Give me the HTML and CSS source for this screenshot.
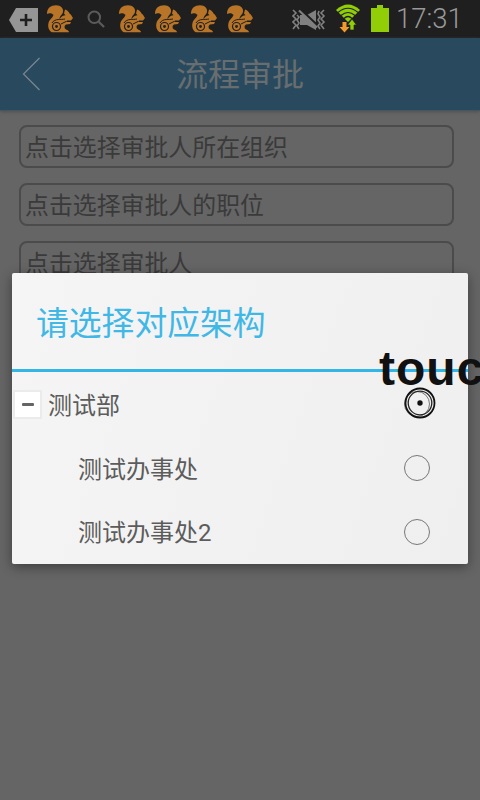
FILE: index.html
```html
<!DOCTYPE html>
<html lang="zh-CN">
<head>
<meta charset="utf-8">
<title>流程审批</title>
<link rel="stylesheet" href="styles.css">
</head>
<body>
<svg width="0" height="0" class="defs">
  <symbol id="squirrel" viewBox="0 0 28 28">
    <path fill="#b87527" d="M1 9C1 3 5 .3 10 .3c5 0 7.500 3 7 6.500-.4 3-3.500 4-3.500 7.200 1.500-2.500 4-3.500 6-3.800L18 8.500 19 4.500c2 .5 3.500 2 4.500 4 2 1 2.500 3.500 3.500 4.500l-2 2.500h-4l-1 1.500h5l-1 2-4 .5c-2 1-2 4 0 5 2 .7 3 1.500 3 2.800H6C3 26 1.500 22 2.500 18 3.500 14 7 13 7.500 9.800 5 7.500 3 8 1 9Z"/>
    <path d="M6 18c3-5 9-3 13-4M15 19l5-2.500" fill="none" stroke="#1f1f1f" stroke-width="1"/>
    <circle cx="10.500" cy="21.500" r="4" fill="none" stroke="#1f1f1f" stroke-width="1.200"/>
    <circle cx="10.500" cy="21.500" r="1.400" fill="#1f1f1f"/>
  </symbol>
</svg>
<div class="screen">
  <div class="status">
    <svg class="tag" width="30" height="24" viewBox="0 0 30 24"><path d="M0 12 7 0h22v24H7Z" fill="#959595"/><path d="M17 6v12M11 12h12" stroke="#1f1f1f" stroke-width="2.600"/></svg>
    <svg class="sq" width="28" height="28"><use href="#squirrel"/></svg>
    <svg class="search" width="19" height="19" viewBox="0 0 19 19" fill="none" stroke="#5b5b5b"><circle cx="7.300" cy="7.300" r="5.800" stroke-width="2"/><path d="m11.700 11.700 5.300 5.300" stroke-width="2.300"/></svg>
    <svg class="sq" width="28" height="28"><use href="#squirrel"/></svg>
    <svg class="sq" width="28" height="28"><use href="#squirrel"/></svg>
    <svg class="sq" width="28" height="28"><use href="#squirrel"/></svg>
    <svg class="sq" width="28" height="28"><use href="#squirrel"/></svg>
    <svg class="mute" width="34" height="22" viewBox="0 0 34 22">
      <path d="M8 6h7l9-5v20l-9-5H8Z" fill="#808080"/>
      <path d="m8 0 18 17" stroke="#1f1f1f" stroke-width="2.500"/>
      <path d="m7 1.500 18 17" stroke="#808080" stroke-width="2.200"/>
      <path d="m1 1 3 3-3 3 3 3-3 3 3 3-3 4M5 6l2 2-2 3 2 3-2 3 2 3M32 1l-3 3 3 3-3 3 3 3-3 3 3 4M27 2l-1 3 2 3-2 3 2 3-2 3 2 3" fill="none" stroke="#808080" stroke-width="1.600"/>
    </svg>
    <svg class="wifi" width="26" height="29" viewBox="0 0 26 29">
      <path d="M1 6Q13-5 25 6L13 18Z" fill="#91ce08"/>
      <path d="M3 8.500Q13 0 23 8.500M6 11.500Q13 5.500 20 11.500M9 14.500Q13 10.500 17 14.500" stroke="#1f1f1f" stroke-width="1.200" fill="none"/>
      <path d="M7.500 18h4v5h3l-5 5.500-5-5.500h3Z" fill="#f39a2c"/>
      <path d="M15 26v-5h-2.500L17 15l4.500 6H19v5Z" fill="#91ce08" stroke="#1f1f1f" stroke-width=".7"/>
    </svg>
    <svg class="battery" width="18" height="27" viewBox="0 0 18 27"><path d="M0 3h6V0h6v3h6v24H0Z" fill="#91ce08"/></svg>
    <span class="clock">17:31</span>
  </div>
  <div class="header">
    <svg class="back" width="19" height="34" viewBox="0 0 19 34"><path d="M17.500 1 1.500 17l16 16" fill="none" stroke="#7b8790" stroke-width="1.200"/></svg>
    <span class="heading">流程审批</span>
  </div>
  <div class="form">
    <div class="field">点击选择审批人所在组织</div>
    <div class="field">点击选择审批人的职位</div>
    <div class="field">点击选择审批人</div>
  </div>
  <div class="dialog">
    <div class="dialog-title">请选择对应架构</div>
    <div class="row parent"><span class="collapse"></span><span class="label">测试部</span><span class="radio"></span></div>
    <div class="row"><span class="label">测试办事处</span><span class="radio"></span></div>
    <div class="row"><span class="label">测试办事处<span class="digit">2</span></span><span class="radio"></span></div>
  </div>
  <div class="touch-text">touc</div>
  <svg class="touch-mark" width="34" height="34" viewBox="0 0 34 34"><circle cx="17" cy="17" r="14.500" fill="none" stroke="#111" stroke-width="1.800"/><circle cx="17" cy="17" r="11.800" fill="none" stroke="#222" stroke-width="1.300"/><circle cx="17" cy="17" r="2.700" fill="#111"/></svg>
</div>
</body>
</html>
```
FILE: styles.css
```css
* { box-sizing: border-box; }
body { margin: 0; font-family: "Noto Sans CJK SC", sans-serif; font-weight: 400; }
svg { display: block; flex: none; }
.defs { position: absolute; }
.screen { position: relative; width: 480px; height: 800px; overflow: hidden; background: #656565; }
.status { display: flex; align-items: flex-start; height: 38px; padding-left: 9px; background: #1f1f1f; }
.tag { margin-top: 8px; }
.sq { margin: 5px 0 0 8px; }
.tag + .sq { margin-left: 7px; }
.search { margin: 10px 4px 0 13px; }
.mute { margin: 9px 0 0 38px; }
.wifi { margin: 4px 0 0 9px; }
.battery { margin: 5px 0 0 10px; }
.clock { margin-left: 7px; font: 300 27.500px/38px Roboto, sans-serif; color: #999; }
.header { display: flex; align-items: flex-start; justify-content: center; position: relative; height: 73px; background: #294a5e; border-bottom: 1px solid #46565f; box-shadow: 0 1px 3px #505050; }
.back { position: absolute; left: 22px; top: 19px; }
.heading { font-size: 32px; line-height: 68px; color: #686d70; }
.form { display: flex; flex-direction: column; gap: 15px; padding: 14px 26px 0 19px; }
.field { height: 43px; border: 2px solid #4b4b4b; border-radius: 8px; padding-left: 4px; font-size: 23.900px; line-height: 38px; color: #3a3a3a; }
.dialog { position: absolute; left: 12px; top: 273px; width: 456px; height: 291px; border-radius: 2px; background: linear-gradient(110deg, #f5f5f5, #efefef); box-shadow: 0 3px 12px rgba(0,0,0,.4); }
.dialog-title { height: 99px; padding-left: 24px; border-bottom: 3px solid #33b5e5; font-size: 32.800px; line-height: 95px; color: #3fb8e7; }
.row { display: flex; align-items: center; height: 64px; padding: 0 38px 0 66px; font-size: 24px; color: #5c5c5c; }
.parent { padding-left: 1px; }
.label { flex: 1; line-height: 64px; }
.digit { font-family: Roboto, sans-serif; }
.radio { width: 26px; height: 26px; border: 1.500px solid #777; border-radius: 50%; }
.collapse { display: flex; align-items: center; justify-content: center; width: 29px; height: 29px; margin-right: 6px; border: 2px solid #ebebeb; background: #fff; }
.collapse::before { content: ""; width: 12px; height: 3px; border-radius: 1px; background: #656565; }
.touch-text { position: absolute; left: 379px; top: 341px; font: bold 48px/55px "Liberation Sans", sans-serif; letter-spacing: 1px; color: #111; }
.touch-mark { position: absolute; left: 403px; top: 386px; }
```
